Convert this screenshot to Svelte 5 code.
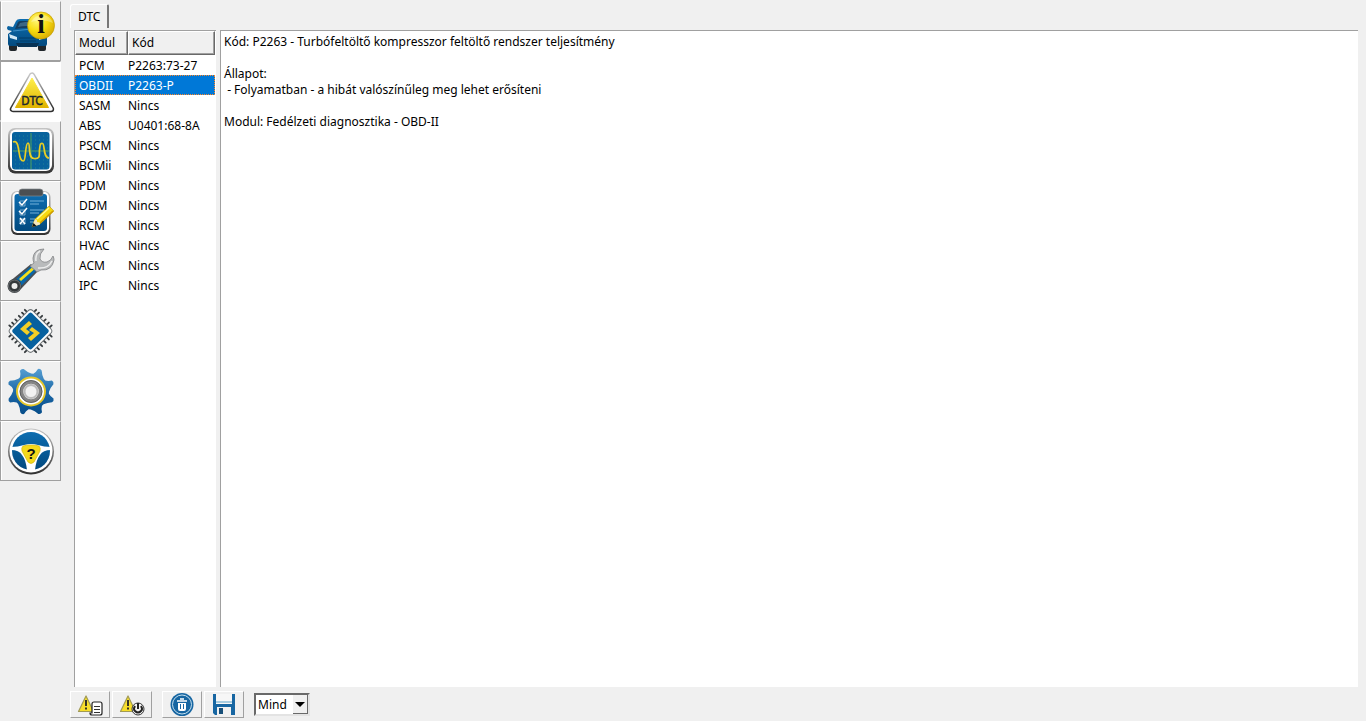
<script lang="ts">
  interface Module {
    name: string;
    code: string;
  }

  const modules: Module[] = [
    { name: 'PCM', code: 'P2263:73-27' },
    { name: 'OBDII', code: 'P2263-P' },
    { name: 'SASM', code: 'Nincs' },
    { name: 'ABS', code: 'U0401:68-8A' },
    { name: 'PSCM', code: 'Nincs' },
    { name: 'BCMii', code: 'Nincs' },
    { name: 'PDM', code: 'Nincs' },
    { name: 'DDM', code: 'Nincs' },
    { name: 'RCM', code: 'Nincs' },
    { name: 'HVAC', code: 'Nincs' },
    { name: 'ACM', code: 'Nincs' },
    { name: 'IPC', code: 'Nincs' },
  ];

  const details = [
    'Kód: P2263 - Turbófeltöltő kompresszor feltöltő rendszer teljesítmény',
    '',
    'Állapot:',
    ' - Folyamatban - a hibát valószínűleg meg lehet erősíteni',
    '',
    'Modul: Fedélzeti diagnosztika - OBD-II',
  ].join('\n');

  const sections = [
    { id: 'vehicle', label: 'Jármű' },
    { id: 'dtc', label: 'Hibakódok' },
    { id: 'scope', label: 'Oszcilloszkóp' },
    { id: 'tests', label: 'Tesztek' },
    { id: 'service', label: 'Szerviz' },
    { id: 'modules', label: 'Modulok' },
    { id: 'settings', label: 'Beállítások' },
    { id: 'help', label: 'Súgó' },
  ];

  let section = $state('dtc');
  let selected = $state('OBDII');
  let filter = $state('Mind');

  // Chip legs, spread along one edge of the square before it is rotated.
  const legs = [-11, -7, -2.5, 2.5, 7, 11];
  const quarters = [0, 90, 180, 270];
  const teeth = [22, 67, 112, 157, 202, 247, 292, 337];
  const grid = [16, 20, 24, 28, 32, 36, 40, 44, 48];
</script>

<svg class="defs" width="0" height="0" aria-hidden="true">
  <defs>
    <linearGradient id="blue" x1="0" y1="0" x2="0" y2="1">
      <stop offset="0" stop-color="#0d6db0" />
      <stop offset="1" stop-color="#034a7f" />
    </linearGradient>
    <linearGradient id="gearBlue" x1="0" y1="0" x2="0" y2="1">
      <stop offset="0" stop-color="#5ba3d6" />
      <stop offset="0.55" stop-color="#1a66a5" />
      <stop offset="1" stop-color="#044a86" />
    </linearGradient>
    <linearGradient id="yellow" x1="0" y1="0" x2="0" y2="1">
      <stop offset="0" stop-color="#fff04a" />
      <stop offset="1" stop-color="#e0b300" />
    </linearGradient>
    <linearGradient id="steel" x1="0" y1="0" x2="0" y2="1">
      <stop offset="0" stop-color="#c4c4c4" />
      <stop offset="1" stop-color="#303030" />
    </linearGradient>
    <radialGradient id="badge" cx="0.35" cy="0.3" r="0.8">
      <stop offset="0" stop-color="#fff57a" />
      <stop offset="0.5" stop-color="#f8dc10" />
      <stop offset="1" stop-color="#d3a500" />
    </radialGradient>
    <clipPath id="gearShape">
      <circle r="18" />
      {#each teeth as turn}
        <path transform="rotate({turn})" d="M-11-13Q-3-16-2-23.5Q0-25 2-23.5Q5-17 11-14Z" />
      {/each}
    </clipPath>
  </defs>
</svg>

<div class="app">
  <nav class="sidebar" aria-label="Fő menü">
    {#each sections as item}
      <button
        type="button"
        class="section"
        class:active={section === item.id}
        aria-label={item.label}
        aria-pressed={section === item.id}
        onclick={() => (section = item.id)}
      >
        <svg viewBox="0 0 60 60" width="60" height="60" aria-hidden="true">
          {#if item.id === 'vehicle'}
            <path d="M9 37h8v11q0 2-2 2h-4q-2 0-2-2zM38 37h8v11q0 2-2 2h-4q-2 0-2-2z" fill="#20262b" />
            <path d="M8 43V33l4-3-4-1q-2-2 0-4l5 1 3-6q1-2 4-2h15q3 0 4 3l5 9q3 2 3 5v8q0 2-2 2H10q-2 0-2-2z" fill="url(#blue)" />
            <path d="M15 28l3-7q1-1 3-1h14l4 8q-12-2-24 0z" fill="#163d5e" />
            <path d="M18 26l2-4q8-2 13-1l2 5q-9-2-17 0z" fill="#3c6785" />
            <path d="M13 30q14-3 28 0" fill="none" stroke="#3d8fc6" />
            <path d="M9 33l8 3v3l-7-2zM46 34l-7 2v3l6-2z" fill="#d3e8f5" />
            <path d="M19 37h18M20 40h16" stroke="#033c68" />
            <path d="M16 42h23l-2 4H18z" fill="#073254" />
            <circle cx="41" cy="24.5" r="13.5" fill="url(#badge)" stroke="#c49d00" stroke-width="0.7" />
            <path d="M31 21q4-8 13-7 6 1 9 8-10-5-22-1z" fill="#fff" opacity="0.3" />
            <text x="41" y="32" class="info">i</text>
          {:else if item.id === 'dtc'}
            <path d="M32 14.5L13 48h38z" fill="none" stroke="url(#steel)" stroke-width="6.4" stroke-linejoin="round" />
            <path d="M32 14.5L13 48h38z" fill="#fff" stroke="#fff" stroke-width="3.5" stroke-linejoin="round" />
            <path d="M32 17L15.5 46.5h33z" fill="url(#yellow)" stroke="url(#yellow)" stroke-linejoin="round" />
            <text x="32" y="44" class="dtc-mark">DTC</text>
          {:else if item.id === 'scope'}
            <rect x="8" y="7" width="46" height="45.5" rx="7" fill="url(#steel)" />
            <rect x="10" y="8.5" width="42" height="41.5" rx="6" fill="#fff" />
            <rect x="12" y="11" width="37.5" height="37.5" rx="3" fill="#07629d" />
            {#each grid as y}
              <path d="M15 {y - 1}h33" stroke="#2a8a92" stroke-width="0.8" stroke-dasharray="1 3" />
            {/each}
            <path d="M31 12v36M13 30h36" stroke="#3a8d71" stroke-width="1.4" />
            <path d="M13 21C17 19 18 24 19 31S21 40 23.500 40S25 22 28 22S27 37 34 37.500S39 34 39.500 29S40 22 42.500 22.500S43 37 49 37" fill="none" stroke="#e9ce24" stroke-width="1.7" />
          {:else if item.id === 'tests'}
            <rect x="11" y="10" width="39.5" height="44" rx="6" fill="url(#steel)" />
            <rect x="12.5" y="11" width="36.5" height="41" rx="5" fill="#fff" />
            <rect x="14.5" y="13" width="32.5" height="37" rx="3" fill="url(#blue)" />
            <path d="M19 13v-2q0-3 3-3h18q3 0 3 3v2q0 2-2 2H21q-2 0-2-2z" fill="#4b4f53" stroke="#85898d" stroke-width="0.7" />
            <path d="M20 20h5v5h-5zM20 29h5v5h-5zM20 38h5v5h-5z" fill="none" stroke="#a6c7de" stroke-width="0.7" />
            <path d="M19 21l3 3 5-6M19 30l3 3 5-6M20 37l5 6M25 37l-5 6" fill="none" stroke="#fff" stroke-width="1.5" />
            <path d="M30 20h14M30 23h9M30 29h14M30 32h9M30 38h10M30 41h6" stroke="#72b0d8" />
            <path d="M32 46l3-8L49 25l5 5-14 13z" fill="#f6d90f" stroke="#ad8a00" stroke-width="0.5" />
            <path d="M35 38l2 1v2l3 .5v2l-8 2.5z" fill="#f5e7bd" />
            <path d="M32 46l1.500-4 3 3z" fill="#111" />
            <path d="M37 38l12-11" stroke="#fff99a" stroke-width="1.5" />
            <path d="M40 42l13-12" stroke="#d19d00" stroke-width="1.5" />
          {:else if item.id === 'service'}
            <path d="M9 41L31 23l7 7-17 18z" fill="#4a4f53" />
            <path d="M14 40L31 25l5 5-15 15z" fill="#0967a9" />
            <path d="M20 39L33 27.5" stroke="#f4df19" stroke-width="3" />
            <path d="M44 8Q34 8 33 17Q33 20 34 22L30 25L37 31L41 29Q52 30 54 19Q54 17 53 15Q51 20 47 21Q42 22 40 18Q39 13 44 8Z" fill="#b9bbbc" stroke="#808284" stroke-width="0.8" />
            <path d="M36 20Q35 13 40 10M38 27Q48 28 52 20" fill="none" stroke="#ededed" stroke-width="1.5" />
            <circle cx="14.5" cy="45" r="5" fill="#ededed" stroke="#34383b" stroke-width="4" />
            <circle cx="14.5" cy="45" r="6" fill="none" stroke="#85898b" stroke-width="0.7" />
          {:else if item.id === 'modules'}
            <g transform="translate(30.5 30) rotate(45)">
              {#each quarters as turn}
                <g transform="rotate({turn})">
                  {#each legs as x}
                    <path d="M{x}-16v-3" stroke="#33383b" stroke-width="1.8" stroke-linecap="round" />
                  {/each}
                </g>
              {/each}
              <rect x="-16.5" y="-16.5" width="33" height="33" rx="4" fill="#74797c" />
              <rect x="-15.5" y="-15.5" width="31" height="31" rx="3" fill="#fff" />
              <rect x="-13.5" y="-13.5" width="27" height="27" rx="2" fill="#07619f" />
            </g>
            <path d="M29 20L20 28l7 6 3-3-4-3 6-5zM32 26l-3 3 5 3-6 5 3 3 9-8z" fill="#f3cf25" />
          {:else if item.id === 'settings'}
            <g transform="translate(31 30.5)">
              <rect x="-25" y="-25" width="50" height="50" fill="url(#gearBlue)" clip-path="url(#gearShape)" />
              <circle r="14" fill="#fff" stroke="#e4c72b" stroke-width="2" />
              <circle r="9.5" fill="#eee" stroke="#858585" stroke-width="3.5" />
              <circle r="11" fill="none" stroke="#505355" stroke-width="0.8" />
              <circle r="6.5" fill="#f2f2f2" stroke="#bbb" stroke-width="2" />
            </g>
          {:else}
            <circle cx="31" cy="30.5" r="23" fill="url(#steel)" />
            <circle cx="31" cy="30" r="21.5" fill="#fff" />
            <circle cx="31" cy="30" r="19" fill="url(#blue)" />
            <path d="M11 26q7 0 13-2 7-2 14 0 6 2 13 2v3q-8 0-11 5-4 5-5 15h-8q-1-10-5-15-3-5-11-5z" fill="#fff" />
            <path d="M31 24q5 0 8 1 2 2 1 5l-6 11q-3 3-6 0l-6-11q-1-3 1-5 3-1 8-1z" fill="#f4d91c" stroke="#d3b40b" stroke-width="0.7" />
            <text x="31" y="38" class="question">?</text>
          {/if}
        </svg>
      </button>
    {/each}
  </nav>

  <main class="page">
    <div class="tabs" role="tablist">
      <button type="button" class="tab" role="tab" aria-selected="true">DTC</button>
    </div>

    <div class="panes">
      <div class="list">
        <table>
          <thead>
            <tr>
              <th class="name">Modul</th>
              <th>Kód</th>
            </tr>
          </thead>
          <tbody>
            {#each modules as module}
              <tr class:selected={selected === module.name} onclick={() => (selected = module.name)}>
                <td>{module.name}</td>
                <td>{module.code}</td>
              </tr>
            {/each}
          </tbody>
        </table>
      </div>
      <div class="details">{details}</div>
    </div>

    <div class="toolbar">
      <button type="button" class="tool" aria-label="Hibakódok olvasása">
        <svg viewBox="1 1 38 25" width="38" height="25" aria-hidden="true">
          <path d="M16 5L8.500 20.500h15z" fill="#f7de2a" stroke="#a19a55" stroke-width="1.2" stroke-linejoin="round" />
          <path d="M16 9v6M16 16.500v2" stroke="#222" stroke-width="1.8" />
          <path d="M22 13q0-2 2-2h6q2 0 2 2v9q0 2-2 2h-8q-2 0-2-2h2z" fill="#fff" stroke="#222" stroke-width="1.2" />
          <path d="M24 15.500h6M24 18.500h6M24 21.500h6" stroke="#333" />
        </svg>
      </button>
      <button type="button" class="tool" aria-label="Hibakódok frissítése">
        <svg viewBox="1 1 38 25" width="38" height="25" aria-hidden="true">
          <path d="M16 5L8.500 20.500h15z" fill="#f7de2a" stroke="#a19a55" stroke-width="1.2" stroke-linejoin="round" />
          <path d="M16 9v6M16 16.500v2" stroke="#222" stroke-width="1.8" />
          <circle cx="26" cy="18" r="6" fill="#f4f4f4" stroke="#333" />
          <path d="M23 15q-2 3 0 5 3 3 6 0 2-2 0-5M26 12v6" fill="none" stroke="#222" stroke-width="2" />
        </svg>
      </button>
      <button type="button" class="tool spaced" aria-label="Hibakódok törlése">
        <svg viewBox="1 1 38 25" width="38" height="25" aria-hidden="true">
          <circle cx="20" cy="13.5" r="11.5" fill="#1766a2" />
          <circle cx="20" cy="13.5" r="9.5" fill="#1766a2" stroke="#c5e0ef" />
          <path d="M15 10h10M18 8h4" stroke="#fff" stroke-width="1.5" />
          <path d="M16 12h8v6q0 2-2 2h-4q-2 0-2-2z" fill="#fff" />
          <path d="M18.500 13v5M21.500 13v5" stroke="#1766a2" />
        </svg>
      </button>
      <button type="button" class="tool" aria-label="Mentés">
        <svg viewBox="1 1 38 25" width="38" height="25" aria-hidden="true">
          <path d="M9 3h22v21H11l-2-2z" fill="#1766a2" />
          <path d="M12 3h16v10H12z" fill="#f7f7f7" />
          <path d="M12 11h16" stroke="#a8ccdf" stroke-width="2" />
          <path d="M13 16h14v8H13z" fill="#f1f1f1" />
          <path d="M15 17h4v6h-4z" fill="#174e78" />
        </svg>
      </button>
      <select class="filter" aria-label="Szűrő" bind:value={filter}>
        <option>Mind</option>
      </select>
    </div>
  </main>
</div>

<style>
  :global(body) {
    margin: 0;
    background: #f0f0f0;
  }

  .defs {
    position: absolute;
  }

  .app {
    display: flex;
    min-height: 100vh;
    background: #f0f0f0;
    color: #000;
    font-family: 'Noto Sans', sans-serif;
    font-size: 12px;
    line-height: 16px;
  }

  button,
  select {
    font: inherit;
    color: inherit;
  }

  .sidebar {
    flex: none;
    width: 61px;
    padding-top: 1px;
  }

  .section {
    display: block;
    box-sizing: border-box;
    width: 61px;
    height: 60px;
    padding: 0;
    overflow: hidden;
    background: #f0f0f0;
    border: 1px solid;
    border-color: #fff #a0a0a0 #a0a0a0 #a0a0a0;
    box-shadow: inset 1px 0 #fff;
  }
  .section svg {
    display: block;
    margin: -1px;
  }
  .section.active {
    background: #fff;
    border-color: #a0a0a0 #fff #fff #a0a0a0;
  }

  .info,
  .question,
  .dtc-mark {
    text-anchor: middle;
    font-weight: bold;
    fill: #111;
  }
  .info {
    font-family: 'Liberation Serif', serif;
    font-size: 27px;
  }
  .question {
    font-family: 'Liberation Sans', sans-serif;
    font-size: 15px;
  }
  .dtc-mark {
    font-family: 'DejaVu Sans Condensed', sans-serif;
    font-size: 12px;
    font-weight: normal;
    fill: #1b2730;
    stroke: #1b2730;
    stroke-width: 0.4px;
  }

  .page {
    flex: 1;
    display: flex;
    flex-direction: column;
    min-width: 0;
    padding: 4px 8px 3px 9px;
  }

  .tabs {
    display: flex;
    height: 26px;
  }
  .tab {
    height: 24px;
    padding: 0 7px;
    background: #f0f0f0;
    border: 1px solid #fff;
    border-right: 2px solid #777;
    border-bottom: 0;
    border-radius: 3px 2px 0 0;
  }

  .panes {
    flex: 1;
    display: flex;
    gap: 4px;
    padding-left: 4px;
  }
  .list {
    flex: none;
    box-sizing: border-box;
    width: 142px;
    background: #fff;
    border-top: 1px solid #a0a0a0;
    border-left: 1px solid #a0a0a0;
  }
  table {
    width: 140px;
    table-layout: fixed;
    border-collapse: separate;
    border-spacing: 0;
  }
  th {
    box-sizing: border-box;
    height: 24px;
    padding: 0 4px;
    text-align: left;
    font-weight: normal;
    background: #f0f0f0;
    border: 1px solid;
    border-color: #fff #696969 #696969 #fff;
    box-shadow: inset -1px -1px #a0a0a0;
  }
  th.name {
    width: 53px;
    padding-left: 3px;
  }
  th + th {
    padding-left: 3px;
  }
  td {
    height: 20px;
    padding: 1px 0 0 4px;
    box-sizing: border-box;
    white-space: nowrap;
  }
  td + td {
    padding-left: 0;
  }
  tr.selected {
    background: #0078d7;
    color: #fff;
    outline: 1px dotted #ff8728;
    outline-offset: -1px;
  }

  .details {
    flex: 1;
    padding: 3px;
    background: #fff;
    border-top: 1px solid #a0a0a0;
    border-left: 1px solid #a0a0a0;
    white-space: pre-wrap;
  }

  .toolbar {
    display: flex;
    align-items: center;
    gap: 2px;
    margin-top: 4px;
  }
  .tool {
    box-sizing: border-box;
    width: 40px;
    height: 27px;
    padding: 0;
    background: #f0f0f0;
    border: 1px solid;
    border-color: #fff #a0a0a0 #a0a0a0 #fff;
  }
  .tool svg {
    display: block;
  }
  .spaced {
    margin-left: 8px;
  }
  .filter {
    box-sizing: border-box;
    width: 56px;
    height: 23px;
    margin-left: 8px;
    padding: 0 2px;
    appearance: none;
    border: 2px solid;
    border-color: #696969 #e3e3e3 #e3e3e3 #696969;
    border-radius: 0;
    background:
      url("data:image/svg+xml,%3Csvg xmlns='http://www.w3.org/2000/svg' width='15' height='19'%3E%3Cpath d='M0 0h15v19H0z' fill='%23696969'/%3E%3Cpath d='M0 0h14v18H0z' fill='%23f0f0f0'/%3E%3Cpath d='M2 7h10l-5 5z'/%3E%3C/svg%3E")
      right top no-repeat #fff;
  }
</style>
